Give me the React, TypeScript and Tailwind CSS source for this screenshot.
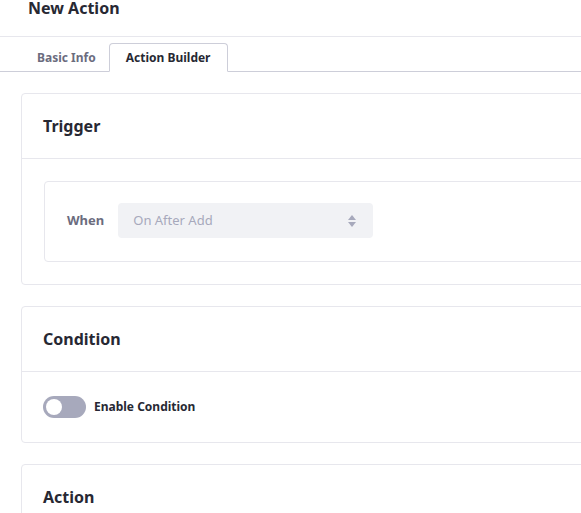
import React from "react";

const font = { fontFamily: '"Noto Sans", "Open Sans", sans-serif' };

const Card = ({ title, children }: { title: string; children?: React.ReactNode }) => (
  <div className="rounded-[4px] border border-[#e7e7ed] bg-white">
    <div className="flex h-[65px] items-center border-b border-[#e7e7ed] px-[21px]">
      <h2 className="text-[16px] font-bold text-[#272833]">{title}</h2>
    </div>
    {children}
  </div>
);

export default function App() {
  const [enabled, setEnabled] = React.useState(false);

  return (
    <div className="h-[513px] w-[581px] overflow-hidden bg-white" style={font}>
      <div className="w-[640px]">
        <div className="flex h-[37px] items-start border-b border-[#e7e7ed] pl-[28px]">
          <h1 className="-mt-[2px] text-[16px] font-bold leading-[20px] text-[#272833]">New Action</h1>
        </div>

        <div className="mt-[6px] flex border-b border-[#cdced9] pl-[24px]">
          <button className="-mb-px h-[29px] border border-transparent px-[12px] text-[12px] font-bold text-[#6b6c7e]">
            Basic Info
          </button>
          <button className="-mb-px h-[29px] rounded-t-[4px] border border-[#cdced9] border-b-white bg-white px-[16px] text-[12px] font-bold text-[#272833]">
            Action Builder
          </button>
        </div>

        <div className="flex flex-col gap-[21px] px-[21px] pt-[21px]">
          <Card title="Trigger">
            <div className="px-[22px] pb-[22px] pt-[22px]">
              <div className="flex items-center rounded-[4px] border border-[#e7e7ed] px-[22px] pb-[23px] pt-[21px]">
                <label className="mr-[14px] text-[13px] font-bold text-[#6b6c7e]">When</label>
                <div className="flex h-[35px] w-[255px] items-center justify-between rounded-[4px] bg-[#f1f2f5] pl-[15px] pr-[16px]">
                  <span className="text-[13px] text-[#a7a9bc]">On After Add</span>
                  <svg width="10" height="14" viewBox="0 0 10 14" fill="#a7a9bc">
                    <path d="M5 1 L9 6 H1 Z" />
                    <path d="M5 13 L9 8 H1 Z" />
                  </svg>
                </div>
              </div>
            </div>
          </Card>

          <Card title="Condition">
            <div className="flex h-[70px] items-center px-[21px]">
              <button
                onClick={() => setEnabled(!enabled)}
                className={`relative h-[22px] w-[43px] rounded-full ${enabled ? "bg-[#0b5fff]" : "bg-[#a7a9bc]"}`}
              >
                <span
                  className={`absolute top-[3px] h-[16px] w-[16px] rounded-full bg-white ${enabled ? "left-[24px]" : "left-[3px]"}`}
                />
              </button>
              <span className="ml-[8px] text-[12px] font-bold text-[#272833]">Enable Condition</span>
            </div>
          </Card>

          <Card title="Action">
            <div className="h-[80px]" />
          </Card>
        </div>
      </div>
    </div>
  );
}
